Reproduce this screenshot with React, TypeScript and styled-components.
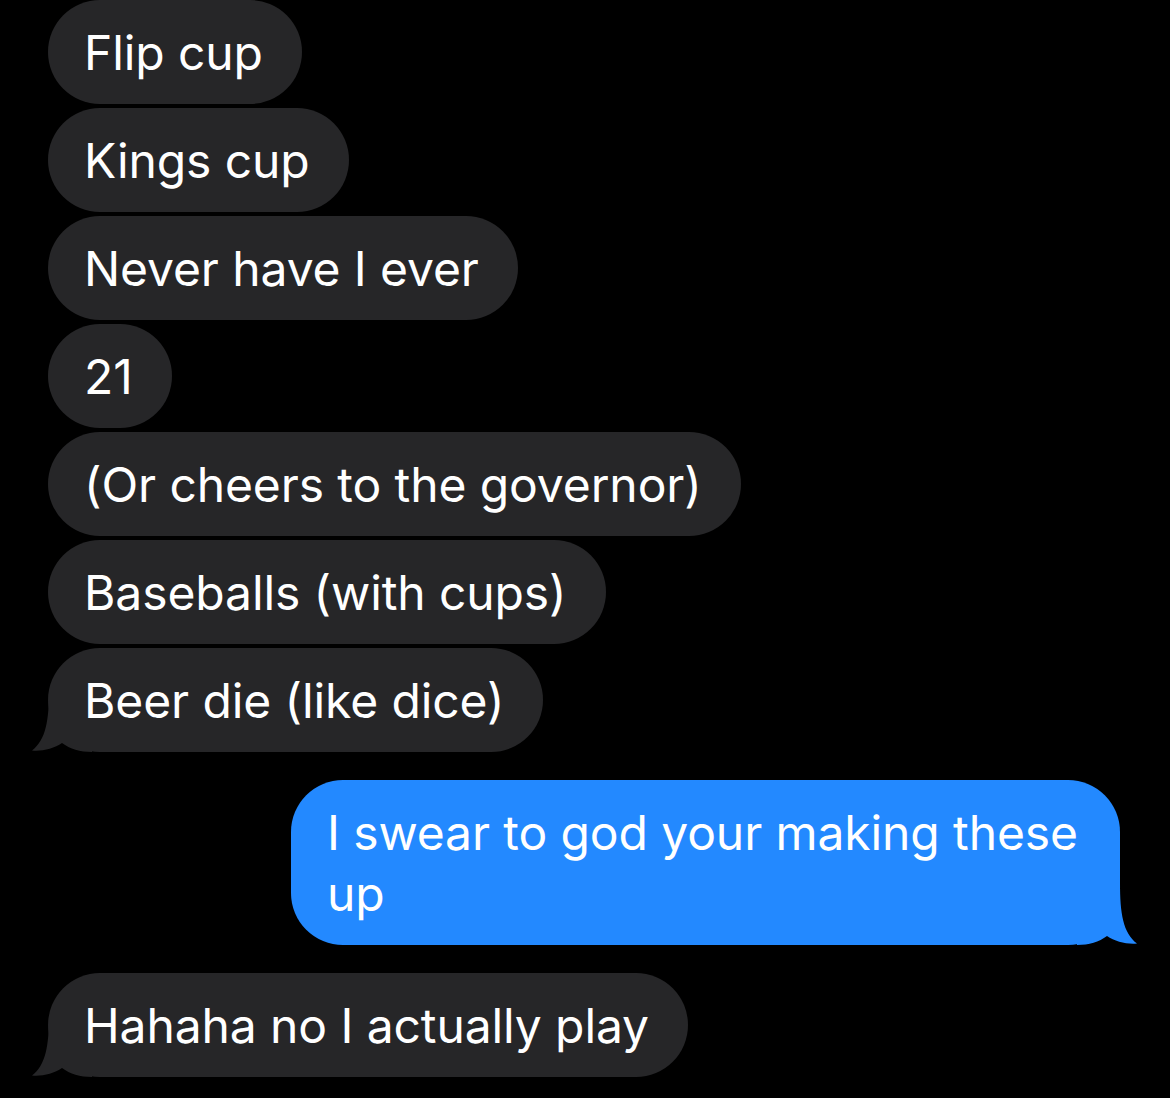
import React from "react";
import styled, { createGlobalStyle } from "styled-components";

const Global = createGlobalStyle`
  html, body { margin: 0; padding: 0; background: #000; }
  body { font-family: Inter, "Noto Sans", "Liberation Sans", sans-serif; -webkit-font-smoothing: antialiased; }
`;

const Thread = styled.div`
  width: 1170px;
  height: 1098px;
  box-sizing: border-box;
  padding: 0 50px 0 48px;
  background: #000;
  display: flex;
  flex-direction: column;
  overflow: hidden;
`;

const Group = styled.div<{ $out?: boolean }>`
  display: flex;
  flex-direction: column;
  align-items: ${(p) => (p.$out ? "flex-end" : "flex-start")};
  gap: 4px;
  & + & { margin-top: 28px; }
`;

const Bubble = styled.div<{ $out?: boolean }>`
  position: relative;
  box-sizing: border-box;
  max-width: ${(p) => (p.$out ? "829px" : "900px")};
  padding: 21.5px ${(p) => (p.$out ? "39px" : "39px")} 21.5px 36px;
  border-radius: 52px;
  background: ${(p) => (p.$out ? "#2389ff" : "#262628")};
  color: #fff;
  font-size: 48px;
  line-height: 61px;
  letter-spacing: -0.1px;
`;

const Text = styled.span`
  position: relative;
  z-index: 1;
`;

const TailSvg = styled.svg<{ $out?: boolean }>`
  position: absolute;
  bottom: 0;
  width: 60px;
  height: 62px;
  ${(p) => (p.$out ? "right: -17px; transform: scaleX(-1);" : "left: -16px;")}
`;

function Tail({ out }: { out?: boolean }) {
  return (
    <TailSvg $out={out} viewBox="0 0 60 62" aria-hidden>
      <path
        d="M17 0 C17 30 14 50 0 60.5 C10 61.5 22 58.5 30 53 C38 59 48 62 60 62 L60 0 Z"
        fill={out ? "#2389ff" : "#262628"}
      />
    </TailSvg>
  );
}

type Msg = { text: string; tail?: boolean };

const first: Msg[] = [
  { text: "Flip cup" },
  { text: "Kings cup" },
  { text: "Never have I ever" },
  { text: "21" },
  { text: "(Or cheers to the governor)" },
  { text: "Baseballs (with cups)" },
  { text: "Beer die (like dice)", tail: true },
];

export default function App() {
  return (
    <>
      <Global />
      <Thread>
        <Group>
          {first.map((m) => (
            <Bubble key={m.text}>
              {m.tail && <Tail />}
              <Text>{m.text}</Text>
            </Bubble>
          ))}
        </Group>
        <Group $out>
          <Bubble $out>
            <Tail out />
            <Text>I swear to god your making these up</Text>
          </Bubble>
        </Group>
        <Group>
          <Bubble>
            <Tail />
            <Text>Hahaha no I actually play</Text>
          </Bubble>
        </Group>
      </Thread>
    </>
  );
}
